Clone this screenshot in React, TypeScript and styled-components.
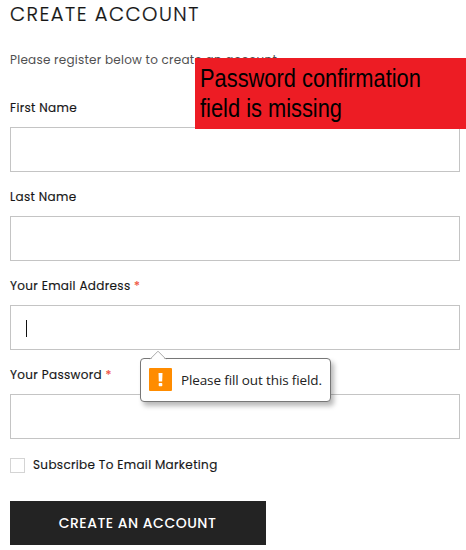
import React from "react";
import styled, { createGlobalStyle } from "styled-components";

const GlobalStyle = createGlobalStyle`
  * { box-sizing: border-box; }
  html, body { margin: 0; background: #fff; overflow: hidden; }
`;

const Page = styled.main`
  position: relative;
  width: 466px;
  height: 550px;
  padding: 0 6px 0 10px;
  overflow: hidden;
  color: #161616;
  font-family: Poppins, Inter, sans-serif;
  font-feature-settings: "cv11";
`;

const Title = styled.h1`
  margin: 0;
  height: 30px;
  font-size: 19.5px;
  font-weight: 300;
  line-height: 30px;
  letter-spacing: 1.5px;
  white-space: nowrap;
  -webkit-text-stroke: 0.2px currentColor;
`;

const Intro = styled.p`
  margin: 18px 0 0;
  height: 24px;
  color: #505050;
  font-size: 12px;
  font-weight: 400;
  line-height: 24px;
  letter-spacing: 0.24px;
  white-space: nowrap;
`;

const Form = styled.form`
  display: flex;
  flex-direction: column;
  margin-top: 11px;
`;

const Field = styled.div`
  position: relative;
  display: flex;
  flex-direction: column;
  height: 89px;
`;

const Label = styled.label`
  height: 44px;
  padding-top: 15px;
  font-size: 12px;
  font-weight: 400;
  line-height: 20px;
  letter-spacing: 0.33px;
  white-space: nowrap;
  -webkit-text-stroke: 0.15px currentColor;
`;

const Required = styled.span`
  color: #f0533f;
`;

const InputBox = styled.div`
  display: flex;
  align-items: center;
  height: 45px;
  padding-left: 15px;
  border: 1px solid #c4c4c4;
`;

const Caret = styled.span`
  width: 1px;
  height: 17px;
  margin-top: 1px;
  background: #111;
`;

const CheckRow = styled.label`
  display: flex;
  align-items: center;
  gap: 8px;
  height: 20px;
  margin-top: 16px;
  font-size: 12px;
  letter-spacing: 0.33px;
  white-space: nowrap;
  -webkit-text-stroke: 0.15px currentColor;
`;

const CheckBox = styled.span`
  width: 15px;
  height: 15px;
  border: 1px solid #d4d4d4;
`;

const Submit = styled.button`
  width: 256px;
  height: 44px;
  margin-top: 26px;
  padding: 0 1px 0 0;
  border: 0;
  background: #232323;
  color: #fff;
  font: inherit;
  font-size: 14px;
  font-weight: 500;
  font-feature-settings: inherit;
  letter-spacing: 0.5px;
  white-space: nowrap;
`;

const Note = styled.aside`
  position: absolute;
  top: 58px;
  left: 195px;
  width: 271px;
  height: 71px;
  padding: 5px 0 0 5px;
  background: #ed1c24;
  color: #000;
`;

const NoteText = styled.div<{ $stretch: number }>`
  width: max-content;
  font-family: "Liberation Sans", Arial, sans-serif;
  font-size: 26px;
  line-height: 30px;
  transform: scaleX(${(p) => p.$stretch});
  transform-origin: 0 0;
`;

const Bubble = styled.div`
  position: absolute;
  top: 97px;
  left: 130px;
  z-index: 1;
  display: flex;
  align-items: center;
  gap: 9px;
  width: 191px;
  height: 44px;
  padding: 0 0 2px 8px;
  border: 1px solid #777;
  border-radius: 4px;
  background: #fff;
  box-shadow: 3px 4px 5px rgba(0, 0, 0, 0.28);
`;

const Pointer = styled.svg`
  position: absolute;
  top: -9px;
  left: 8px;
`;

const BubbleText = styled.span`
  padding-top: 2px;
  color: #222;
  font-family: "Open Sans", "Noto Sans", sans-serif;
  font-size: 13.5px;
  letter-spacing: -0.13px;
  line-height: 18px;
  white-space: nowrap;
`;

const Alert = () => (
  <svg width="23" height="23" viewBox="0 0 23 23">
    <rect width="23" height="23" rx="1" fill="#ff8c00" />
    <path d="M9.5 5h4l-.3 8.5h-3.4z" fill="#fff" />
    <rect x="9.7" y="15" width="3.6" height="3.2" rx=".7" fill="#fff" />
  </svg>
);

const fields = [
  { label: "First Name" },
  { label: "Last Name" },
  { label: "Your Email Address", required: true, focused: true },
  { label: "Your Password", required: true },
];

export default function App() {
  return (
    <>
      <GlobalStyle />
      <Page>
        <Title>CREATE ACCOUNT</Title>
        <Intro>Please register below to create an account</Intro>
        <Form>
          {fields.map((f) => (
            <Field key={f.label}>
              <Label>
                {f.label} {f.required && <Required>*</Required>}
              </Label>
              <InputBox>{f.focused && <Caret />}</InputBox>
              {f.focused && (
                <Bubble role="alert">
                  <Pointer width="18" height="10" viewBox="0 0 18 10">
                    <path d="M1 10 9 1.5 17 10z" fill="#fff" />
                    <path d="M1 9.2 9 1.2 17 9.2" fill="none" stroke="#aaa" />
                  </Pointer>
                  <Alert />
                  <BubbleText>Please fill out this field.</BubbleText>
                </Bubble>
              )}
            </Field>
          ))}
          <CheckRow>
            <CheckBox />
            Subscribe To Email Marketing
          </CheckRow>
          <Submit type="button">CREATE AN ACCOUNT</Submit>
        </Form>
        <Note>
          <NoteText $stretch={0.84}>
            Password confirmation
            <br />
            field is missing
          </NoteText>
        </Note>
      </Page>
    </>
  );
}
